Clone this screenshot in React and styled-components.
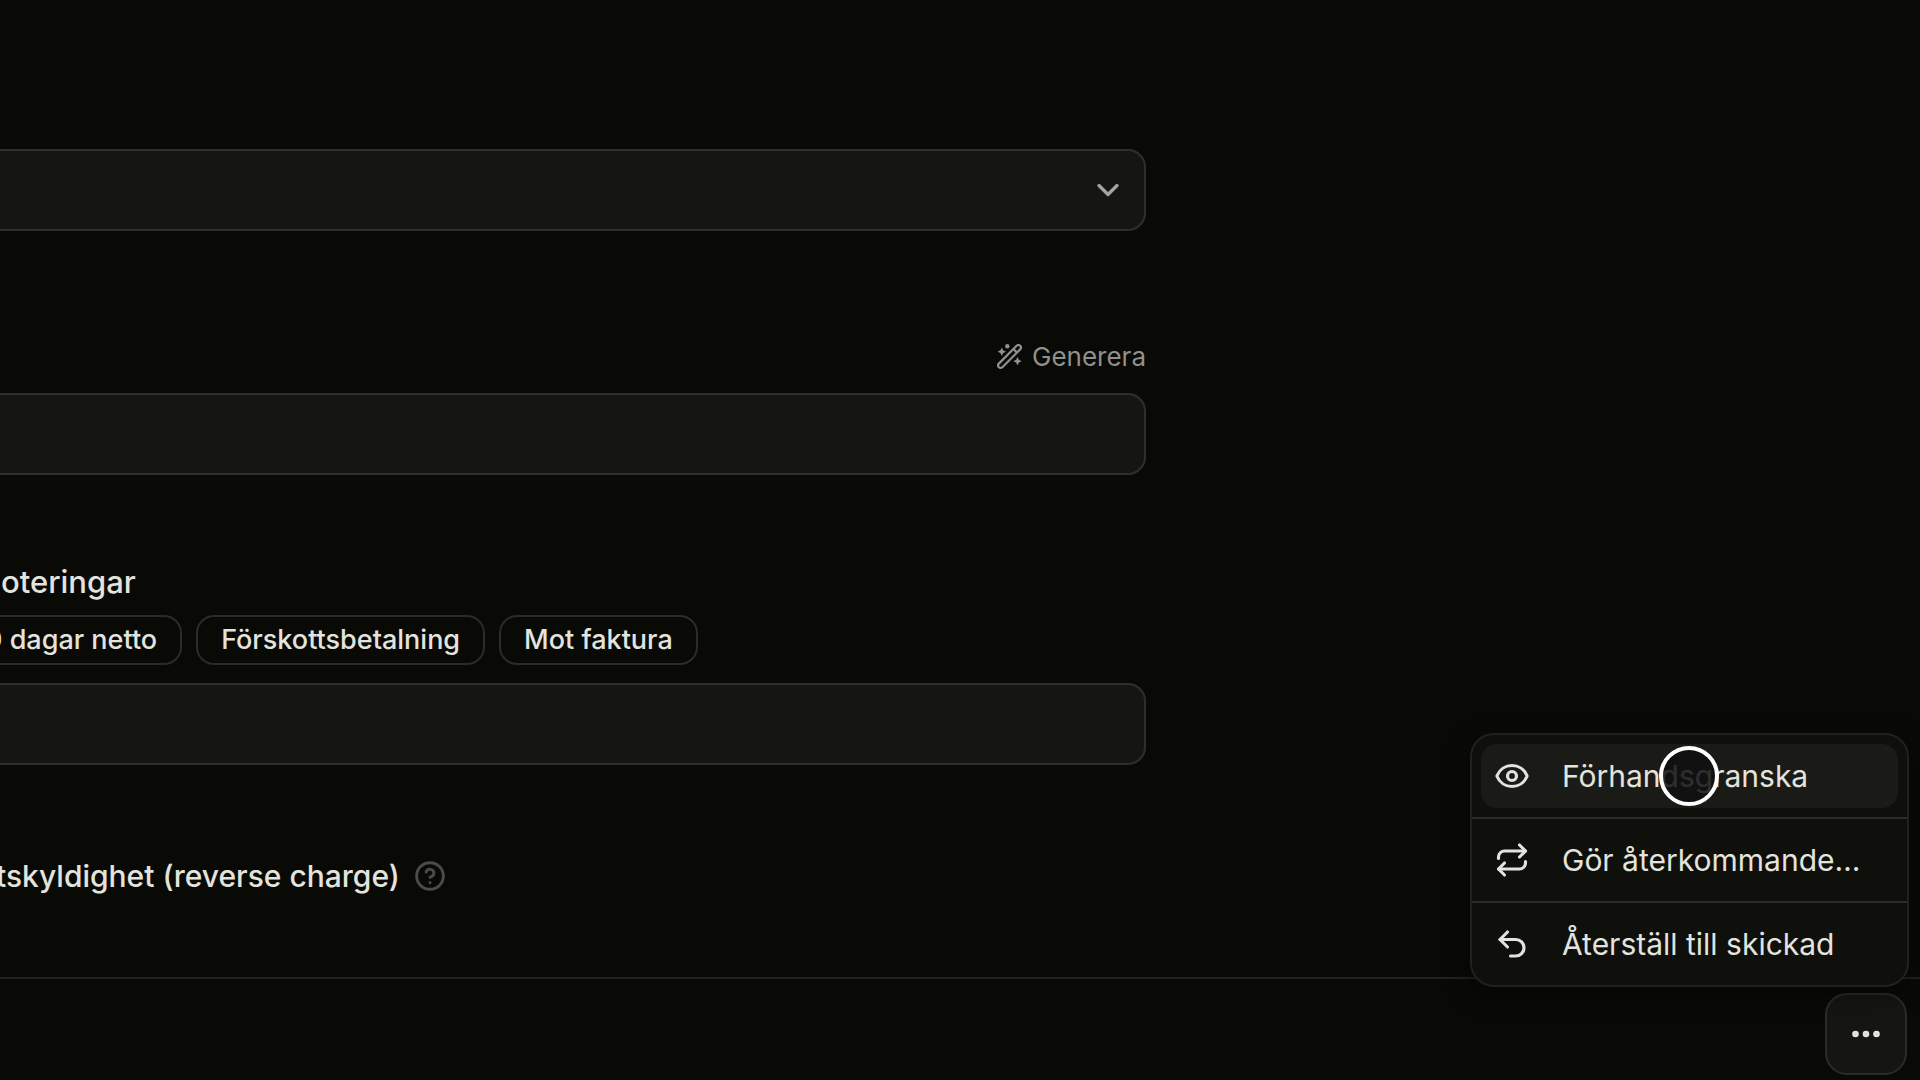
import React from "react";
import styled, { createGlobalStyle, css } from "styled-components";
import { ChevronDown, CircleHelp, Ellipsis, Eye, Repeat, Undo2 } from "lucide-react";

const GlobalStyle = createGlobalStyle`
  *, *::before, *::after { box-sizing: border-box; }
  body {
    margin: 0;
    background: #090a05;
    color: #e3e3df;
    font-family: Inter, "Liberation Sans", sans-serif;
    -webkit-font-smoothing: antialiased;
  }
  button, input, select { font: inherit; color: inherit; margin: 0; }
`;

const Page = styled.div`
  display: flex;
  flex-direction: column;
  min-height: 100vh;
  overflow: hidden;
`;

const Main = styled.main`
  flex: 1;
  display: grid;
  grid-template-columns: minmax(0, 1fr) 774px;
`;

const Form = styled.form`
  display: flex;
  flex-direction: column;
  margin-left: -40px;
  padding-top: 149px;
`;

const Field = styled.div`
  display: flex;
  flex-direction: column;
  margin-bottom: ${(p) => p.$gap}px;
`;

const control = css`
  width: 100%;
  height: 82px;
  padding: 0 24px;
  border: 2px solid #2f302c;
  border-radius: 18px;
  background: #151611;
  outline: none;
  font-size: 27px;
`;

const SelectBox = styled.div`
  position: relative;
  color: #a3a39f;

  svg {
    position: absolute;
    right: 20px;
    top: 23px;
    pointer-events: none;
  }
`;

const Select = styled.select`
  ${control}
  appearance: none;
`;

const Input = styled.input`
  ${control}
`;

const GenerateButton = styled.button`
  display: flex;
  align-items: center;
  align-self: flex-end;
  gap: 9px;
  height: 36px;
  margin-bottom: 18px;
  padding: 0;
  border: 0;
  background: none;
  color: #90908c;
  font-size: 26px;
  line-height: 36px;
`;

const Label = styled.label`
  padding-left: 41px;
  margin-bottom: 15px;
  font-size: 31px;
  font-weight: 500;
  line-height: 36px;
`;

const Chips = styled.div`
  display: flex;
  gap: 14px;
  margin-bottom: 18px;
`;

const Chip = styled.button`
  height: 50px;
  padding: 0 23px;
  border: 2px solid #2b2c28;
  border-radius: 18px;
  background: none;
  font-size: 27px;
  font-weight: 500;
  line-height: 44px;
  white-space: nowrap;
`;

const Notice = styled.div`
  display: flex;
  align-items: center;
  gap: 14px;
  padding-left: 36px;
  font-size: 30px;
  font-weight: 500;
  line-height: 36px;
`;

const HelpButton = styled.button`
  display: flex;
  padding: 0;
  border: 0;
  background: none;
  color: #4b4b48;
`;

const Footer = styled.footer`
  display: flex;
  justify-content: flex-end;
  padding: 14px 13px 5px;
  border-top: 2px solid #21221e;
`;

const MenuAnchor = styled.div`
  position: relative;
`;

const MoreButton = styled.button`
  display: flex;
  align-items: center;
  justify-content: center;
  width: 82px;
  height: 82px;
  padding: 0;
  border: 2px solid #2b2c28;
  border-radius: 22px;
  background: #151611;
`;

const Menu = styled.div`
  position: absolute;
  right: -2px;
  bottom: calc(100% + 6px);
  width: 439px;
  border: 2px solid #21221e;
  border-radius: 24px;
  background: #0f100b;
  box-shadow: 0 8px 24px rgba(0, 0, 0, 0.4);
`;

const MenuSection = styled.div`
  padding: 9px;

  & + & { border-top: 2px solid #2b2c28; }
`;

const MenuItem = styled.button`
  display: flex;
  align-items: center;
  gap: 32px;
  width: 100%;
  height: 64px;
  padding: 0 13px;
  border: 0;
  border-radius: 16px;
  background: ${(p) => (p.$active ? "#1a1b16" : "none")};
  font-size: 30px;
  white-space: nowrap;

  svg { flex: none; }
`;

const Pointer = styled.span`
  position: absolute;
  left: 187px;
  top: 11px;
  width: 60px;
  height: 60px;
  border: 4px solid #fff;
  border-radius: 50%;
  background: rgba(16, 16, 18, 0.86);
  pointer-events: none;
`;

function WandIcon() {
  return (
    <svg width="26" height="26" viewBox="0 0 26 26" fill="none" stroke="currentColor" strokeWidth="2.2" aria-hidden="true">
      <g transform="rotate(-45 12.5 12.5)">
        <rect x="-2.6" y="10" width="30.2" height="5" rx="2.5" />
        <path d="M20.5 10v5" />
      </g>
      <g fill="currentColor" stroke="none">
        <path d="M4.8 3.5 6.2 6.300l2.800 1.400-2.800 1.400-1.400 2.800-1.400-2.800L.6 7.700l2.800-1.400z" />
        <path d="m20.500 13 1.400 2.800 2.800 1.400-2.800 1.400-1.400 2.800-1.400-2.800-2.800-1.400 2.800-1.400z" />
        <circle cx="10.300" cy="2.300" r="2.200" />
      </g>
    </svg>
  );
}

const chips = ["0 dagar netto", "Förskottsbetalning", "Mot faktura"];

const actions = [
  { text: "Förhandsgranska", Icon: Eye, active: true },
  { text: "Gör återkommande…", Icon: Repeat },
  { text: "Återställ till skickad", Icon: Undo2 },
];

export default function App() {
  return (
    <Page>
      <GlobalStyle />
      <Main>
        <Form>
          <Field $gap={108}>
            <SelectBox>
              <Select aria-label="Val" defaultValue="">
                <option value="" />
              </Select>
              <ChevronDown size={36} strokeWidth={2.2} />
            </SelectBox>
          </Field>
          <Field $gap={89}>
            <GenerateButton type="button">
              <WandIcon />
              Generera
            </GenerateButton>
            <Input aria-label="Generera" />
          </Field>
          <Field $gap={93}>
            <Label htmlFor="notes">oteringar</Label>
            <Chips>
              {chips.map((text) => (
                <Chip type="button" key={text}>{text}</Chip>
              ))}
            </Chips>
            <Input id="notes" />
          </Field>
          <Notice>
            <span>tskyldighet (reverse charge)</span>
            <HelpButton type="button" aria-label="?">
              <CircleHelp size={32} strokeWidth={2.2} />
            </HelpButton>
          </Notice>
        </Form>
      </Main>
      <Footer>
        <MenuAnchor>
          <MoreButton type="button" aria-label="…">
            <Ellipsis size={36} strokeWidth={2.4} />
          </MoreButton>
          <Menu>
            {actions.map(({ text, Icon, active }) => (
              <MenuSection key={text}>
                <MenuItem type="button" $active={active}>
                  <Icon size={36} strokeWidth={2.1} />
                  {text}
                </MenuItem>
              </MenuSection>
            ))}
            <Pointer />
          </Menu>
        </MenuAnchor>
      </Footer>
    </Page>
  );
}
